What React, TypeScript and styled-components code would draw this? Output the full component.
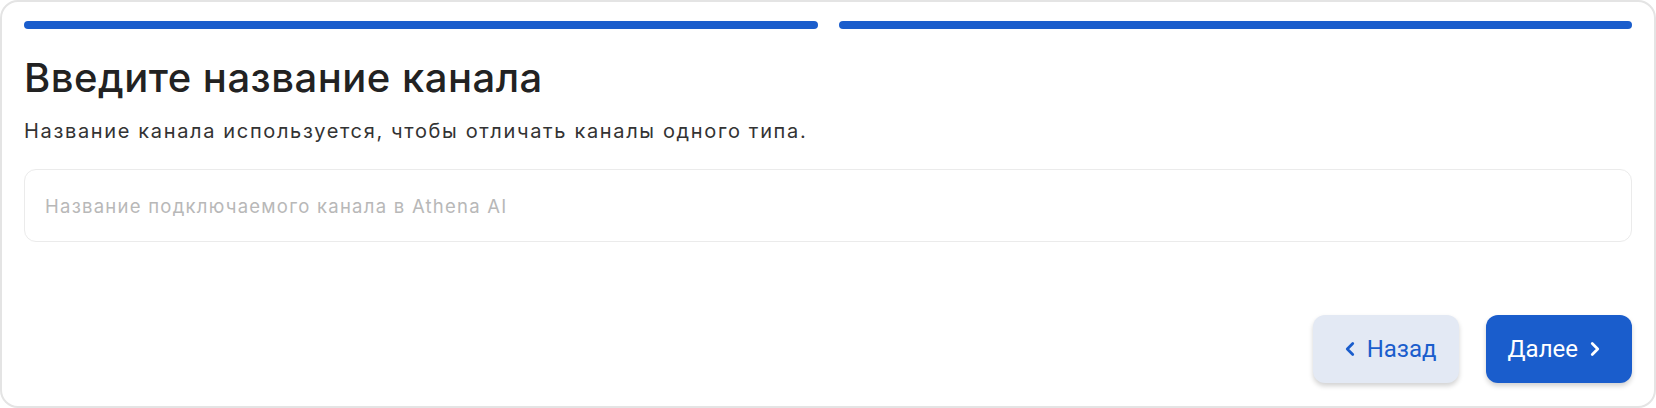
import React from 'react'
import styled, { createGlobalStyle } from 'styled-components'
import { ChevronLeft, ChevronRight } from 'lucide-react'

const GlobalStyle = createGlobalStyle`
  * { box-sizing: border-box; }
  body {
    margin: 0;
    background: #ffffff;
    font-family: Inter, "Noto Sans", sans-serif;
  }
`

// шаги мастера
const steps = [true, true]

const App: React.FC = () => {
  return (
    <>
      <GlobalStyle />
      <Card>
        <Progress>
          {steps.map((done, i) => (
            <Step key={i} $done={done} />
          ))}
        </Progress>

        <Title>Введите название канала</Title>
        <Subtitle>Название канала используется, чтобы отличать каналы одного типа.</Subtitle>

        <Input placeholder="Название подключаемого канала в Athena AI" />

        <Footer>
          <Button $variant="secondary">
            <ChevronLeft size={22} strokeWidth={3} />
            Назад
          </Button>
          <Button $variant="primary">
            Далее
            <ChevronRight size={22} strokeWidth={3} />
          </Button>
        </Footer>
      </Card>
    </>
  )
}

const Card = styled.div`
  width: 1656px;
  height: 408px;
  border: 2px solid #e4e4e4;
  border-radius: 18px;
  background: #fff;
  padding: 19px 22px 0;
  display: flex;
  flex-direction: column;
`

const Progress = styled.div`
  display: flex;
  gap: 21px;
`

const Step = styled.div<{ $done: boolean }>`
  flex: 1;
  height: 8px;
  border-radius: 4px;
  background: ${p => (p.$done ? '#1a5dcc' : '#e3e9f4')};
`

const Title = styled.h1`
  margin: 25px 0 0;
  font-size: 40px;
  line-height: 48px;
  font-weight: 500;
  color: #222;
  letter-spacing: 0.5px;
`

const Subtitle = styled.p`
  margin: 15px 0 0;
  font-size: 20px;
  line-height: 28px;
  font-weight: 400;
  color: #333;
  letter-spacing: 1.65px;
`

const Input = styled.input`
  margin-top: 24px;
  width: 100%;
  height: 73px;
  border: 1px solid #ebebeb;
  border-radius: 12px;
  padding: 0 20px;
  font-family: Inter, "Noto Sans", sans-serif;
  font-size: 18.5px;
  letter-spacing: 1.25px;
  color: #222;
  outline: none;
  &::placeholder {
    color: #b8b8b8;
  }
`

const Footer = styled.div`
  margin-top: 73px;
  display: flex;
  justify-content: flex-end;
  gap: 27px;
`

const Button = styled.button<{ $variant: 'primary' | 'secondary' }>`
  height: 68px;
  display: flex;
  align-items: center;
  gap: 6px;
  padding: ${p => (p.$variant === 'primary' ? '0 26px 0 22px' : '0 22px 0 26px')};
  border: none;
  border-radius: 12px;
  font-family: Roboto, "Liberation Sans", sans-serif;
  font-size: 24px;
  font-weight: 400;
  cursor: pointer;
  background: ${p => (p.$variant === 'primary' ? '#1a5dcc' : '#e3e9f4')};
  color: ${p => (p.$variant === 'primary' ? '#fff' : '#1a5dcc')};
  box-shadow: 0 3px 5px rgba(0, 0, 0, 0.18);
`

export default App
